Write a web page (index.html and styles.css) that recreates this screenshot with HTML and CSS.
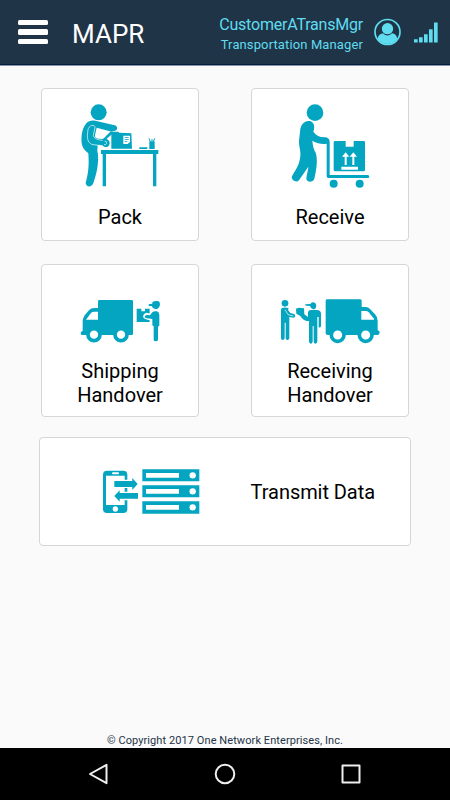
FILE: index.html
```html
<!DOCTYPE html>
<html lang="en">
<head>
  <meta charset="UTF-8">
  <meta name="viewport" content="width=device-width, initial-scale=1">
  <title>MAPR</title>
  <link rel="stylesheet" href="styles.css">
</head>
<body>
  <header class="header">
    <button class="menu-btn" aria-label="Menu">
      <span></span>
      <span></span>
      <span></span>
    </button>
    <h1>MAPR</h1>
    <div class="user">
      <div class="user-name">CustomerATransMgr</div>
      <div class="user-role">Transportation Manager</div>
    </div>
    <svg class="avatar" viewBox="0 0 81 84">
      <circle cx="40.500" cy="42" r="37.500" fill="none" stroke="#5fdcf0" stroke-width="5"/>
      <circle cx="40.500" cy="32" r="17"/>
      <path d="M11 64 C12 51 20 47 27 46 Q40 59 54 46 C62 47 69 52 70 64 C54 83 27 83 11 64 Z"/>
    </svg>
    <svg class="signal" viewBox="0 0 72 62">
      <path d="M0 51h11v10H0z M15 45h11v16H15z M30 36h11v25H30z M45 21h11v40H45z M60 1h11v60H60z"/>
    </svg>
  </header>

  <main class="content">
    <div class="grid">
      <a class="card">
        <svg class="icon-tall" viewBox="135 72 240 252">
          <circle cx="191" cy="97" r="24"/>
          <path d="M154 130 C161 121 176 120 187 124 L239 136 C251 140 247 154 236 153 L230 155 L185 143 L180 166 C179 174 185 177 201 177 C215 174 225 181 224 191 C221 203 211 204 203 197 L188 195 L187 213 C192 230 190 270 175 309 C171 322 153 323 152 309 C162 275 162 248 160 220 C148 211 142 203 140 190 C138 165 142 145 154 130 Z"/>
          <path class="cut" d="M158 158 C157 133 181 132 180 143 L175 166 Q176 179 203 181 M158 158 C155 179 161 191 174 194 L203 197"/>
          <path class="cut" d="M209 184 Q215 182 215 190 Q213 196 207 193"/>
          <path d="M204 177 L226 155 L230 155 H250 L253 158 L289 160 L291 206 H229 V164 L210 181 Z"/>
          <path class="white" d="M265 167h20v19l-7 6h-13z"/>
          <path d="M269 172h12v2h-12z M269 178h12v2h-12z M269 184h8v2h-8z M313 202h24v5h-24z M343 184h16v23h-16z"/>
          <path class="thin" d="M346 185 L342 175 M351 184 V177 M355 185 L359 175"/>
          <path d="M198 210h172v12h-6v97h-10v-97H213v97h-10v-97h-5z"/>
        </svg>
        <span>Pack</span>
      </a>

      <a class="card">
        <svg class="icon-tall" viewBox="135 72 240 252">
          <circle cx="210" cy="98" r="25"/>
          <path d="M166 147 C170 128 184 120 197 124 C209 130 210 143 205 155 C213 166 224 172 238 172 C249 172 254 177 254 187 V285 H368 Q373 286 373 290 Q373 294 368 294 H250 Q245 294 245 289 V191 C232 194 217 190 202 182 C203 197 207 210 212 218 C218 235 216 263 208 296 C204 308 187 308 184 297 C184 290 189 272 190 260 L162 301 C154 309 141 302 140 292 C145 278 160 263 164 240 C171 218 161 201 162 183 Z"/>
          <path d="M271 183h31v17h24v-17h30q4 0 4 4v83q0 4-4 4h-85q-5 0-5-4v-83q0-4 5-4z"/>
          <path class="white" d="M289 260h50v9h-50z M299 255v-25h-8l11-13 11 13h-8v25z M322 255v-25h-8l11-13 11 13h-8v25z"/>
          <circle cx="266" cy="311" r="12"/>
          <circle cx="344" cy="311" r="12"/>
        </svg>
        <span>Receive</span>
      </a>

      <a class="card">
        <svg class="icon-ship" viewBox="132 120 246 138">
          <path d="M194 126h96q4 0 4 4v98q0 3-4 3H141q-4 0-4-5 0-6 6-7v-31q1-8 6-16l13-15q6-7 16-7h11v-20q0-4 5-4z"/>
          <path class="white" d="M153 185 L168 165 Q171 161 178 161 H189 V185 Z"/>
          <circle class="wheel" cx="177" cy="230" r="18"/>
          <circle class="wheel" cx="258" cy="230" r="18"/>
          <path d="M305 152h14v8h11v-8h14v40h-39z"/>
          <path class="gap" d="M346 170 L334 168 Q327 171 328 177 Q331 182 350 184"/>
          <path d="M341 139 L352 137 C350 130 360 128 369 129 Q375 130 375 139 Q374 153 362 154 Q353 153 350 144 L341 144 Z"/>
          <path d="M352 163 Q357 158 366 160 Q373 162 373 171 V203 L369 206 V245 Q368 250 362 250 Q356 250 356 245 V205 L352 202 V183 L336 181 Q329 180 329 176 Q331 170 337 171 L345 172 Z"/>
        </svg>
        <span>Shipping<br>Handover</span>
      </a>

      <a class="card">
        <svg class="icon-receiving" viewBox="102 120 306 138">
          <circle cx="120" cy="136" r="10"/>
          <path d="M111 150 Q120 146 131 151 L129 156 L136 165 L147 168 Q153 171 150 177 L145 179 L133 177 V241 Q132 246 127 246 Q122 246 122 241 V194 H119 V241 Q118 246 113 246 Q108 246 108 241 V156 Q108 151 111 150 Z"/>
          <path class="cut" d="M120 155 L129 170 L145 174" stroke-width="1.500"/>
          <path d="M153 152 L161 149 L177 151 L178 169 L189 177 V163 Q190 156 198 156 H215 Q228 157 228 167 V205 Q226 210 221 208 V177 H217 V251 Q216 257 210 257 Q206 256 206 250 V204 H203 V251 Q202 257 197 257 Q192 256 192 250 V189 H186 Q174 187 166 174 L154 167 Z"/>
          <path d="M181 139 L196 138 Q199 132 206 133 Q214 135 214 143 Q213 154 204 154 Q197 152 195 144 L182 143 Z"/>
          <path d="M247 124h98q5 0 5 4v19h12q8 0 13 6l15 16q8 8 8 19v29q6 1 6 6 0 7-5 8H248q-6 0-6-5v-98q0-4 5-4z"/>
          <path class="white" d="M349 159 H362 Q367 159 371 163 L387 182 V185 H349 Z"/>
          <circle class="wheel" cx="278" cy="231" r="19"/>
          <circle class="wheel" cx="362" cy="231" r="19"/>
        </svg>
        <span>Receiving<br>Handover</span>
      </a>
    </div>

    <a class="card card-wide">
      <svg class="icon-transmit" viewBox="216 114 294 138">
        <path d="M231 122h49q12 0 12 12v104q0 11-12 11h-49q-12 0-12-11V134q0-12 12-12z"/>
        <path class="white" d="M228 137h56v88h-56z M283 149h11v25h-11z M283 185h11v26h-11z"/>
        <rect class="white" x="246" y="127" width="21" height="6" rx="3"/>
        <circle class="white" cx="256" cy="237" r="8"/>
        <path d="M253 153h54v-9l16 18-16 18v-9h-54z M324 189h-55v-8l-16 17 16 17v-9h55z"/>
        <path d="M337 118h171v36H337z M337 166h171v36H337z M337 214h171v37H337z"/>
        <path class="white" d="M348 129h99v14h-99z M348 177h99v14h-99z M348 225h99v14h-99z"/>
        <circle class="white" cx="488" cy="136" r="9.500"/>
        <circle class="white" cx="488" cy="184" r="9.500"/>
        <circle class="white" cx="488" cy="232" r="9.500"/>
      </svg>
      <span>Transmit Data</span>
    </a>
  </main>

  <footer class="copyright">© Copyright 2017 One Network Enterprises, Inc.</footer>

  <nav class="navbar">
    <svg viewBox="0 0 22 22"><path d="M18.500 1.800 V20.200 L2 11 Z"/></svg>
    <svg viewBox="0 0 22 22"><circle cx="11" cy="11" r="9.300"/></svg>
    <svg viewBox="0 0 22 22"><rect x="2.500" y="2.500" width="17" height="17"/></svg>
  </nav>
</body>
</html>
```
FILE: styles.css
```css
* {
  box-sizing: border-box;
}

body {
  margin: 0;
  height: 100vh;
  display: flex;
  flex-direction: column;
  background: #fafafa;
  font-family: Roboto, sans-serif;
  color: #000;
}

.header {
  height: 66px;
  display: flex;
  align-items: center;
  padding: 0 12px 1px 18px;
  background: #1f3447;
  border-bottom: 1px solid #8795a3;
  box-shadow: inset 0 -1px 0 #061b40;
}

.menu-btn {
  width: 30px;
  display: flex;
  flex-direction: column;
  gap: 4px;
  padding: 0;
  border: none;
  background: none;
}

.menu-btn span {
  height: 5.500px;
  border-radius: 1.500px;
  background: #fff;
}

.header h1 {
  margin: 4px 0 0 24px;
  font-size: 26px;
  font-weight: 400;
  color: #fff;
}

.user {
  margin-left: auto;
  margin-top: 5px;
  text-align: right;
  color: #5fdcf0;
}

.user-name {
  font-size: 16px;
  line-height: 20px;
  letter-spacing: -0.210px;
}

.user-role {
  font-size: 13px;
  line-height: 19px;
  letter-spacing: 0.120px;
}

.avatar {
  width: 27px;
  height: 28px;
  margin-left: 11px;
  fill: #5fdcf0;
}

.signal {
  width: 24px;
  height: 21px;
  margin-left: 13px;
  fill: #5fdcf0;
}

.content {
  flex: 1;
  padding: 22px 39px 0;
}

.grid {
  display: grid;
  grid-template-columns: 158px 158px;
  justify-content: space-between;
  row-gap: 23px;
  padding: 0 2px;
}

.card {
  height: 153px;
  display: flex;
  flex-direction: column;
  align-items: center;
  background: #fff;
  border: 1px solid #d3d7da;
  border-radius: 4px;
  font-size: 20px;
  line-height: 24px;
  text-align: center;
}

.card svg {
  fill: #04a5c1;
}

.card .white {
  fill: #fff;
}

.card .cut {
  fill: none;
  stroke: #fff;
  stroke-width: 2;
}

.card .gap {
  fill: #fff;
  stroke: #fff;
  stroke-width: 7;
}

.thin {
  fill: none;
  stroke: #04a5c1;
  stroke-width: 3;
}

.card .wheel {
  fill: #fff;
  stroke: #04a5c1;
  stroke-width: 11;
}

.icon-tall {
  width: 80px;
  height: 84px;
  margin: 15px 0 17px;
}

.icon-ship {
  width: 82px;
  height: 46px;
  margin: 33px 0 15px;
}

.icon-receiving {
  width: 102px;
  height: 46px;
  margin: 33px 0 15px;
}

.card-wide {
  height: 109px;
  margin-top: 20px;
  padding: 0 35px 0 62px;
  flex-direction: row;
  justify-content: space-between;
}

.icon-transmit {
  width: 98px;
  height: 46px;
  margin-bottom: 1px;
}

.card-wide span {
  letter-spacing: -0.060px;
}

.copyright {
  height: 14px;
  font-size: 11px;
  line-height: 14px;
  letter-spacing: 0.080px;
  text-align: center;
  color: #1f3447;
}

.navbar {
  height: 52px;
  display: flex;
  align-items: center;
  justify-content: space-between;
  padding: 0 88px;
  background: #000;
}

.navbar svg {
  width: 22px;
  height: 22px;
  fill: none;
  stroke: #eee;
  stroke-width: 2;
  stroke-linejoin: round;
}
```
